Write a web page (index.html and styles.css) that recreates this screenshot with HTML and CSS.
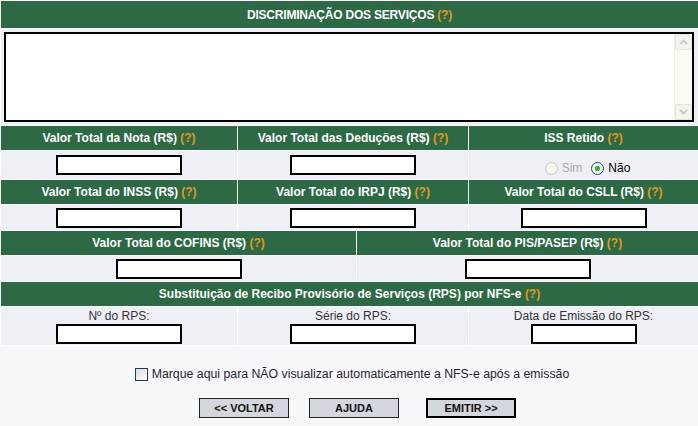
FILE: index.html
```html
<!DOCTYPE html>
<html lang="pt-BR">
<head>
<meta charset="utf-8">
<title>NFS-e</title>
<link rel="stylesheet" href="styles.css">
</head>
<body>
<div class="form">
  <div class="row cols1">
    <div class="head h-title">DISCRIMINAÇÃO DOS SERVIÇOS <span class="help">(?)</span></div>
  </div>
  <div class="row cols1">
    <div class="data area-cell">
      <div class="area-box">
        <textarea class="area" aria-label="Discriminação dos serviços"></textarea>
        <div class="scrollbar">
          <div class="sb-btn"><svg width="9" height="6" viewBox="0 0 9 6"><path d="M1 5 L4.5 1.5 L8 5" fill="none" stroke="#c4c4bc" stroke-width="1.6"/></svg></div>
          <div class="sb-track"></div>
          <div class="sb-btn"><svg width="9" height="6" viewBox="0 0 9 6"><path d="M1 1 L4.5 4.5 L8 1" fill="none" stroke="#c4c4bc" stroke-width="1.6"/></svg></div>
        </div>
      </div>
    </div>
  </div>
  <div class="row cols3">
    <div class="head">Valor Total da Nota (R$) <span class="help">(?)</span></div>
    <div class="head">Valor Total das Deduções (R$) <span class="help">(?)</span></div>
    <div class="head">ISS Retido <span class="help">(?)</span></div>
  </div>
  <div class="row cols3 tall">
    <div class="data"><input class="field" type="text"></div>
    <div class="data"><input class="field" type="text"></div>
    <div class="data radios">
      <label class="radio-label disabled"><input type="radio" name="iss" disabled> Sim</label>
      <label class="radio-label"><input type="radio" name="iss" checked> Não</label>
    </div>
  </div>
  <div class="row cols3">
    <div class="head">Valor Total do INSS (R$) <span class="help">(?)</span></div>
    <div class="head">Valor Total do IRPJ (R$) <span class="help">(?)</span></div>
    <div class="head">Valor Total do CSLL (R$) <span class="help">(?)</span></div>
  </div>
  <div class="row cols3">
    <div class="data"><input class="field" type="text"></div>
    <div class="data"><input class="field" type="text"></div>
    <div class="data"><input class="field" type="text"></div>
  </div>
  <div class="row cols2">
    <div class="head">Valor Total do COFINS (R$) <span class="help">(?)</span></div>
    <div class="head">Valor Total do PIS/PASEP (R$) <span class="help">(?)</span></div>
  </div>
  <div class="row cols2">
    <div class="data"><input class="field" type="text"></div>
    <div class="data"><input class="field" type="text"></div>
  </div>
  <div class="row cols1">
    <div class="head">Substituição de Recibo Provisório de Serviços (RPS) por NFS-e <span class="help">(?)</span></div>
  </div>
  <div class="row cols3">
    <div class="data rps"><span class="rps-label">Nº do RPS:</span><input class="field" type="text"></div>
    <div class="data rps"><span class="rps-label">Série do RPS:</span><input class="field" type="text"></div>
    <div class="data rps"><span class="rps-label">Data de Emissão do RPS:</span><input class="field short" type="text"></div>
  </div>
</div>

<div class="footer">
  <label class="check-line"><input type="checkbox" class="check"> Marque aqui para NÃO visualizar automaticamente a NFS-e após a emissão</label>
  <div class="buttons">
    <button class="btn">&lt;&lt; VOLTAR</button>
    <button class="btn">AJUDA</button>
    <button class="btn primary">EMITIR &gt;&gt;</button>
  </div>
</div>
</body>
</html>
```

FILE: styles.css
```css
html, body {
  margin: 0;
  padding: 0;
}
body {
  background: #f8f8fc;
  font-family: "Liberation Sans", Arial, sans-serif;
  font-size: 12px;
  color: #222;
  width: 698px;
}
.form {
  display: flex;
  flex-direction: column;
  gap: 1px;
  background: #ffffff;
  padding: 1px 0 1px 1px;
}
.row {
  display: grid;
  gap: 1px;
}
.cols1 { grid-template-columns: 1fr; }
.cols3 { grid-template-columns: 236px 230px 1fr; }
.cols2 { grid-template-columns: 355px 1fr; }

.head {
  background: #2d6945;
  color: #ffffff;
  font-weight: bold;
  font-size: 12px;
  height: 24px;
  display: flex;
  align-items: center;
  justify-content: center;
  white-space: pre;
}
.h-title {
  height: 27px;
  letter-spacing: -0.2px;
}
.help { color: #e39a1f; }

.data {
  background: #eef0f6;
  display: flex;
  align-items: center;
  justify-content: center;
  padding: 3px 0 2px;
}
.tall .data { padding: 4px 0 4px; }

.field {
  box-sizing: border-box;
  width: 126px;
  height: 20px;
  border: 2px solid #000;
  background: #fff;
  margin: 0;
  padding: 0 2px;
  font: 12px "Liberation Sans", Arial, sans-serif;
}
.field.short { width: 106px; }

.area-cell {
  padding: 3px 4px 3px 3px;
  display: block;
}
.area-box {
  height: 90px;
  box-sizing: border-box;
  border: 2px solid #000;
  background: #fff;
  display: flex;
}
.area {
  flex: 1;
  border: 0;
  margin: 0;
  padding: 2px 2px;
  resize: none;
  outline: none;
  font: 12px "Liberation Sans", Arial, sans-serif;
  background: transparent;
}
.scrollbar {
  width: 17px;
  display: flex;
  flex-direction: column;
  background: #fdfdf6;
  border-left: 1px solid #f0efe4;
}
.sb-btn {
  height: 16px;
  box-sizing: border-box;
  border: 1px solid #e6e5da;
  border-radius: 2px;
  background: #f4f4ee;
  display: flex;
  align-items: center;
  justify-content: center;
}
.sb-track { flex: 1; }

.tall .radios {
  gap: 9px;
  padding: 7px 0 1px 8px;
}
.radio-label {
  display: flex;
  align-items: center;
  gap: 4px;
  color: #000;
}
.radio-label.disabled { color: #aaa; }
.radio-label input {
  appearance: none;
  -webkit-appearance: none;
  width: 13px;
  height: 13px;
  margin: 0;
  border-radius: 50%;
  border: 1px solid #1c5180;
  background: radial-gradient(circle at 40% 40%, #ffffff 0%, #e6e6e0 100%);
  box-sizing: border-box;
}
.radio-label input:checked {
  background: radial-gradient(circle, #2eb82e 0 2.5px, #ffffff 3px, #e6e6e0 100%);
}
.radio-label input:disabled {
  border-color: #cac8bb;
  background: #f6f6f2;
}

.rps {
  flex-direction: column;
  gap: 1px;
  padding: 2px 0 1px;
  color: #333;
}

.footer {
  padding-top: 21px;
}
.check-line {
  display: flex;
  align-items: center;
  justify-content: center;
  gap: 4px;
  font-size: 12.3px;
  color: #1e1e30;
  padding-left: 6px;
}
.check {
  appearance: none;
  -webkit-appearance: none;
  width: 13px;
  height: 13px;
  margin: 0;
  border: 1px solid #1c3a5a;
  background: linear-gradient(135deg, #dcdcd6, #ffffff);
  box-sizing: border-box;
}
.buttons {
  display: flex;
  padding: 17px 0 0 199px;
}
.btn {
  box-sizing: border-box;
  width: 90px;
  height: 20px;
  margin: 0 20px 0 0;
  border: 1px solid #222;
  background: #d4d8de;
  font: bold 11px "Liberation Sans", Arial, sans-serif;
  color: #111;
  padding: 0;
}
.btn:nth-child(2) { margin-right: 27px; }
.btn.primary { border: 2px solid #000; }
```
